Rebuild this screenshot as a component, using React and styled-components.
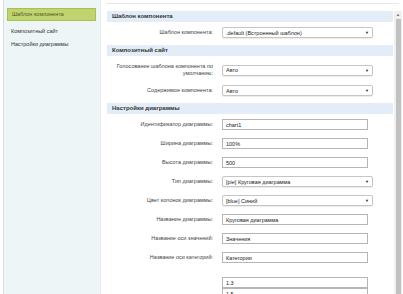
import React from 'react';
import styled, { createGlobalStyle } from 'styled-components';

const Global = createGlobalStyle`
  html, body { margin: 0; padding: 0; background: #fff; }
  body { font-family: Arial, "Liberation Sans", sans-serif; font-size: 6px; color: #333; overflow: hidden; }
`;

const Page = styled.div`
  display: flex;
  width: 403px;
  height: 294px;
  overflow: hidden;
`;

const Side = styled.div`
  width: 96px;
  margin-left: 3px;
  border-left: 1px solid #d8dcdc;
  border-right: 1px solid #e8efef;
  background: #eef5f7;
  padding-top: 8px;
  display: flex;
  flex-direction: column;
`;

const SideItem = styled.div`
  margin: 0 4px ${p => (p.active ? '4px' : '0')} 3px;
  height: ${p => (p.active ? '11px' : '13px')};
  line-height: ${p => (p.active ? '11px' : '13px')};
  padding-left: 4px;
  color: ${p => (p.active ? '#4e5a2a' : '#333')};
  background: ${p => (p.active ? '#bfd46e' : 'transparent')};
  border: ${p => (p.active ? '1px solid #a9bf55' : 'none')};
  font-size: 5.5px;
`;

const Main = styled.div`
  flex: 1;
  margin-left: 6px;
  display: flex;
  flex-direction: column;
`;

const TopLine = styled.div`
  height: 3px;
  border-bottom: 1px solid #e6e6e6;
  margin-right: 4px;
`;

const Body = styled.div`
  flex: 1;
  display: flex;
  padding-top: 7px;
  min-height: 0;
`;

const Form = styled.div`
  flex: 1;
  display: flex;
  flex-direction: column;
`;

const Scroll = styled.div`
  width: 8px;
  margin-left: 1px;
  margin-right: 1px;
  background: #f0f0f0;
  display: flex;
  flex-direction: column;
  align-items: center;
`;

const ScrollArrow = styled.div`
  height: 8px;
  font-size: 4px;
  line-height: 8px;
  color: #666;
`;

const Thumb = styled.div`
  flex: 1;
  width: 5px;
  background: #c1c1c1;
`;

const Section = styled.div`
  height: 11px;
  line-height: 11px;
  background: #e3edf8;
  padding-left: 5px;
  font-weight: bold;
  color: #333;
  margin-bottom: ${p => p.mb || 5}px;
`;

const Row = styled.div`
  display: flex;
  align-items: center;
  height: ${p => p.h || 11}px;
  margin-bottom: ${p => p.mb ?? 8}px;
`;

const Label = styled.div`
  width: 106px;
  text-align: right;
  padding-right: 9px;
  font-size: 5.5px;
  line-height: 7px;
  color: #444;
  flex-shrink: 0;
`;

const Field = styled.div`
  width: ${p => (p.select ? 151 : 146)}px;
  height: 11px;
  box-sizing: border-box;
  border: 1px solid ${p => (p.select ? '#c5c5c5' : '#b5b5b5')};
  border-radius: ${p => (p.select ? '2px' : '0')};
  background: #fff;
  display: flex;
  align-items: center;
  justify-content: space-between;
  padding: 0 3px;
  font-size: 5.5px;
  color: #222;
  flex-shrink: 0;
  box-shadow: ${p => (p.select ? '0 1px 1px rgba(0,0,0,0.08)' : 'none')};
`;

const Arrow = styled.span`
  font-size: 4px;
  color: #222;
`;

const Input = ({ value }) => <Field>{value}</Field>;
const Select = ({ value }) => (
  <Field select>
    <span>{value}</span>
    <Arrow>▼</Arrow>
  </Field>
);

export default function App() {
  return (
    <Page>
      <Global />
      <Side>
        <SideItem active>Шаблон компонента</SideItem>
        <SideItem>Композитный сайт</SideItem>
        <SideItem>Настройки диаграммы</SideItem>
      </Side>
      <Main>
        <TopLine />
        <Body>
          <Form>
            <Section>Шаблон компонента</Section>
            <Row mb={7}>
              <Label>Шаблон компонента:</Label>
              <Select value=".default (Встроенный шаблон)" />
            </Row>
            <Section mb={7}>Композитный сайт</Section>
            <Row h={14} mb={8}>
              <Label>Голосование шаблона компонента по умолчанию:</Label>
              <Select value="Авто" />
            </Row>
            <Row mb={7}>
              <Label>Содержимое компонента:</Label>
              <Select value="Авто" />
            </Row>
            <Section mb={5}>Настройки диаграммы</Section>
            <Row>
              <Label>Идентификатор диаграммы:</Label>
              <Input value="chart1" />
            </Row>
            <Row>
              <Label>Ширина диаграммы:</Label>
              <Input value="100%" />
            </Row>
            <Row>
              <Label>Высота диаграммы:</Label>
              <Input value="500" />
            </Row>
            <Row>
              <Label>Тип диаграммы:</Label>
              <Select value="[pie] Круговая диаграмма" />
            </Row>
            <Row>
              <Label>Цвет колонок диаграммы:</Label>
              <Select value="[blue] Синий" />
            </Row>
            <Row>
              <Label>Название диаграммы:</Label>
              <Input value="Круговая диаграмма" />
            </Row>
            <Row>
              <Label>Название оси значений:</Label>
              <Input value="Значения" />
            </Row>
            <Row mb={14}>
              <Label>Название оси категорий:</Label>
              <Input value="Категории" />
            </Row>
            <Row mb={0}>
              <Label />
              <Input value="1.3" />
            </Row>
            <Row mb={0}>
              <Label />
              <Input value="1.5" />
            </Row>
          </Form>
          <Scroll>
            <ScrollArrow>▲</ScrollArrow>
            <Thumb />
          </Scroll>
        </Body>
      </Main>
    </Page>
  );
}
